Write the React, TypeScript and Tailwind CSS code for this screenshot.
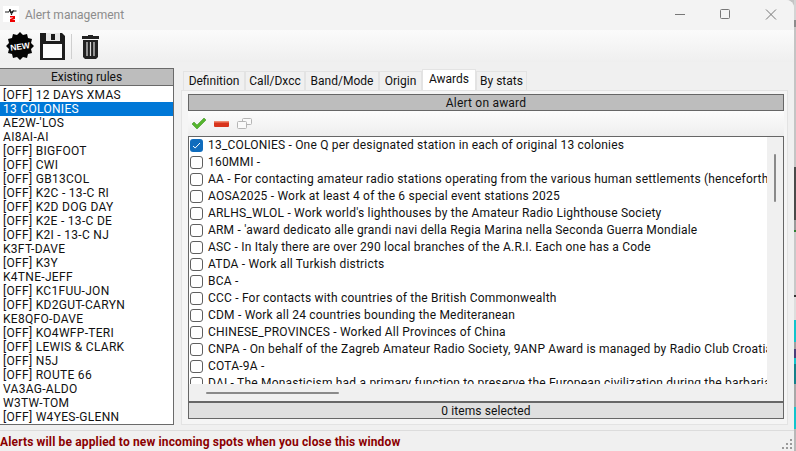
const rules = ["[OFF] 12 DAYS XMAS","13 COLONIES","AE2W-'LOS","AI8AI-AI","[OFF] BIGFOOT","[OFF] CWI","[OFF] GB13COL","[OFF] K2C - 13-C RI","[OFF] K2D DOG DAY","[OFF] K2E - 13-C DE","[OFF] K2I - 13-C NJ","K3FT-DAVE","[OFF] K3Y","K4TNE-JEFF","[OFF] KC1FUU-JON","[OFF] KD2GUT-CARYN","KE8QFO-DAVE","[OFF] KO4WFP-TERI","[OFF] LEWIS & CLARK","[OFF] N5J","[OFF] ROUTE 66","VA3AG-ALDO","W3TW-TOM","[OFF] W4YES-GLENN"];
const awards = [
"13_COLONIES - One Q per designated station in each of original 13 colonies",
"160MMI -",
"AA - For contacting amateur radio stations operating from the various human settlements (henceforth",
"AOSA2025 - Work at least 4 of the 6 special event stations 2025",
"ARLHS_WLOL - Work world's lighthouses by the Amateur Radio Lighthouse Society",
"ARM - 'award dedicato alle grandi navi della Regia Marina nella Seconda Guerra Mondiale",
"ASC - In Italy there are over 290 local branches of the A.R.I. Each one has a Code",
"ATDA - Work all Turkish districts",
"BCA -",
"CCC - For contacts with countries of the British Commonwealth",
"CDM - Work all 24 countries bounding the Mediteranean",
"CHINESE_PROVINCES - Worked All Provinces of China",
"CNPA - On behalf of the Zagreb Amateur Radio Society, 9ANP Award is managed by Radio Club Croatia",
"COTA-9A -",
"DAI - The Monasticism had a primary function to preserve the European civilization during the barbarian",
];
const tabs = ["Definition","Call/Dxcc","Band/Mode","Origin","Awards","By stats"];
const tabW = [62,60,74,43,54,51];
const strip: [number, string][] = [[20,"#d4d4d4"],[7,"#8c8c8c"],[140,"#c4c4c4"],[53,"#4a4a4a"],[10,"#9a9a9a"],[2,"#2e7d32"],[63,"#c8c8c8"],[2,"#333333"],[23,"#dddddd"],[22,"#12c4cc"],[7,"#a0a0a0"],[9,"#4a3f7a"],[6,"#12c4cc"],[20,"#14808a"],[23,"#a8a8a8"],[22,"#12c4cc"],[22,"#b8b8b8"]];

export default function App() {
  return (
    <div className="w-[796px] h-[451px] overflow-hidden flex bg-[#c4c4c4] text-[12px] text-[#111] font-['Roboto','Open_Sans',sans-serif]">
      <div className="w-[794px] h-full flex flex-col bg-[#f0f0f0] rounded-tr-lg overflow-hidden">
        {/* Title bar */}
        <div className="h-[30px] flex items-center bg-[#f3f3f3] shrink-0">
          <svg width="16" height="16" viewBox="0 0 16 16" className="ml-[3px] -mt-[2px]">
            <rect width="16" height="16" fill="#fff"/>
            <path d="M2 6h4l1-3 1.500 6 1-4h4" fill="none" stroke="#222" strokeWidth="1"/>
            <path d="M7 4l1.500 1.500L11 4l-1 3H7z" fill="#222"/>
            <path d="M7 10h5v3l-3 1h3v2H7v-3l3-1.200V11.500H7z" fill="#e00"/>
          </svg>
          <span className="ml-[6px] text-[#8c8c8c]">Alert management</span>
          <div className="ml-auto flex items-center">
            <svg width="46" height="30" viewBox="0 0 46 30"><path d="M19 14.500h10" stroke="#777" strokeWidth="1"/></svg>
            <svg width="46" height="30" viewBox="0 0 46 30"><rect x="18.500" y="9.500" width="9" height="9" rx="1" fill="none" stroke="#777"/></svg>
            <svg width="46" height="30" viewBox="0 0 46 30"><path d="M18 9.500l10 10M28 9.500l-10 10" stroke="#777" strokeWidth="1"/></svg>
          </div>
        </div>
        {/* Toolbar */}
        <div className="h-[32px] flex items-center shrink-0 bg-gradient-to-b from-[#fbfbfb] to-[#efefef]">
          <svg width="28" height="28" viewBox="0 0 28 28" className="ml-[6px]">
            <path d="M14 0l3 3 4-1 1 4 4 1-1 4 3 3-3 3 1 4-4 1-1 4-4-1-3 3-3-3-4 1-1-4-4-1 1-4-3-3 3-3-1-4 4-1 1-4 4 1z" fill="#050505"/>
            <text x="14" y="17.500" textAnchor="middle" fontSize="8.500" fontWeight="800" fill="#fff" transform="rotate(-8 14 14)" fontFamily="Liberation Sans">NEW</text>
          </svg>
          <svg width="26" height="28" viewBox="0 0 26 28" className="ml-[6px]">
            <path d="M0 1h22l3 3v24H0z" fill="#1c1c1c"/>
            <rect x="6" y="1" width="14" height="8" fill="#e8e8e8"/>
            <rect x="11" y="2" width="4" height="6" fill="#1c1c1c"/>
            <rect x="3" y="12" width="19" height="14" fill="#fbfbfb"/>
          </svg>
          <div className="w-px h-[25px] bg-[#cfcfcf] ml-[5px]"></div>
          <svg width="18" height="25" viewBox="0 0 18 25" className="ml-[10px]">
            <path d="M6 2V1h5v1h6v3H0V2z" fill="#222"/>
            <path d="M1 6h15v17l-2 2H3l-2-2z" fill="#222"/>
            <path d="M5 8v14M8.500 8v14M12 8v14" stroke="#ddd" strokeWidth="1.200"/>
          </svg>
        </div>
        {/* Main */}
        <div className="flex-1 flex min-h-0 pt-[6px] pb-[5px]">
          {/* Left */}
          <div className="w-[174px] shrink-0 flex flex-col">
            <div className="h-[18px] bg-[#bdbdbd] border border-l-0 border-[#6a6a6a] flex items-center justify-center shrink-0">Existing rules</div>
            <div className="flex-1 bg-white border-r border-b border-[#6a6a6a] pt-[2px] overflow-hidden tracking-[0.3px]">
              {rules.map((r, i) => (
                <div key={r} className={"h-[14px] leading-[14px] pl-[3px] whitespace-nowrap " + (i === 1 ? "bg-[#0078d7] text-white" : "")}>{r}</div>
              ))}
            </div>
          </div>
          {/* Right */}
          <div className="w-[607px] ml-[7px] flex flex-col min-w-0">
            <div className="h-[22px] flex shrink-0 pl-[2px] pt-[1px]">
              {tabs.map((t, i) => (
                <div key={t} style={{ width: tabW[i] }} className={"flex items-center justify-center border border-b-0 border-[#e3e3e3] " + (t === "Awards" ? "h-[21px] bg-white pb-[2px]" : "h-[19px] mt-[2px] bg-[#f0f0f0]")}>{t}</div>
              ))}
            </div>
            <div className="flex-1 min-h-0 flex flex-col bg-[#f5f5f5] border border-[#e3e3e3] pl-[6px] pr-[3px] pt-[3px] pb-[5px]">
              <div className="h-[17px] bg-[#bdbdbd] border border-[#666] flex items-center justify-center shrink-0 tracking-[0.2px]">Alert on award</div>
              <div className="h-[25px] flex items-center pl-[3px] shrink-0 bg-gradient-to-b from-[#fcfcfc] to-[#eeeeee]">
                <svg width="16" height="13" viewBox="0 0 16 13"><path d="M1 7l2-2 3 3 7-7 2 2-9 9z" fill="#55b52c" stroke="#2f8a16" strokeWidth="0.500"/></svg>
                <svg width="15" height="6" viewBox="0 0 15 6" className="ml-[7px]"><rect width="15" height="6" rx="1" fill="#d8341c"/><rect y="0" width="15" height="1.500" fill="#ef8a70"/></svg>
                <svg width="15" height="11" viewBox="0 0 15 11" fill="#fafafa" stroke="#b5b5b5" className="ml-[8px]"><rect x="5.500" y="0.500" width="9" height="6" rx="1"/><rect x="0.500" y="3.500" width="9" height="7" rx="1"/></svg>
              </div>
              <div className="flex-1 min-h-0 flex flex-col border border-[#666] bg-[#f0f0f0]">
                <div className="flex-1 min-h-0 flex">
                  <div className="w-[578px] bg-white overflow-hidden shrink-0 h-[247px] tracking-[0.2px]">
                    {awards.map((a, i) => (
                      <div key={a} className="h-[17px] flex items-center pl-[1px] whitespace-nowrap">
                        <span className={"w-[13px] h-[13px] rounded-[3px] shrink-0 flex items-center justify-center " + (i === 0 ? "bg-[#0f6cbd]" : "border border-[#5f5f5f] bg-white")}>
                          {i === 0 && <svg width="9" height="9" viewBox="0 0 9 9"><path d="M1 5l2.200 2L8 2" fill="none" stroke="#fff" strokeWidth="1"/></svg>}
                        </span>
                        <span className="ml-[5px] pb-[2px]">{a}</span>
                      </div>
                    ))}
                  </div>
                  <div className="flex-1 flex justify-center pt-[17px]">
                    <div className="w-[2px] h-[48px] bg-[#8a8a8a] rounded-full"></div>
                  </div>
                </div>
                <div className="h-[19px] shrink-0 flex items-center pl-[17px] border-b-[2px] border-[#666]">
                  <div className="w-[133px] h-[2px] bg-[#8a8a8a] rounded-full"></div>
                </div>
                <div className="h-[15px] shrink-0 bg-[#dfdfdf] flex items-center justify-center tracking-[0.1px]">0 items selected</div>
              </div>
            </div>
          </div>
        </div>
        {/* Status */}
        <div className="h-[21px] shrink-0 flex items-center border-t border-[#dcdcdc] relative pt-[1px]">
          <span className="font-bold text-[#8b0000] leading-none tracking-[0.14px]">Alerts will be applied to new incoming spots when you close this window</span>
          <svg width="12" height="12" viewBox="0 0 12 12" className="absolute right-[1px] bottom-[1px]" fill="#9a9a9a">
            <rect x="9" y="1" width="2" height="2"/><rect x="5" y="5" width="2" height="2"/><rect x="9" y="5" width="2" height="2"/><rect x="1" y="9" width="2" height="2"/><rect x="5" y="9" width="2" height="2"/><rect x="9" y="9" width="2" height="2"/>
          </svg>
        </div>
      </div>
      <div className="w-[2px] h-full flex flex-col">
        {strip.map(([h, c], i) => (
          <div key={i} style={{ height: h, background: c }}></div>
        ))}
      </div>
    </div>
  );
}
